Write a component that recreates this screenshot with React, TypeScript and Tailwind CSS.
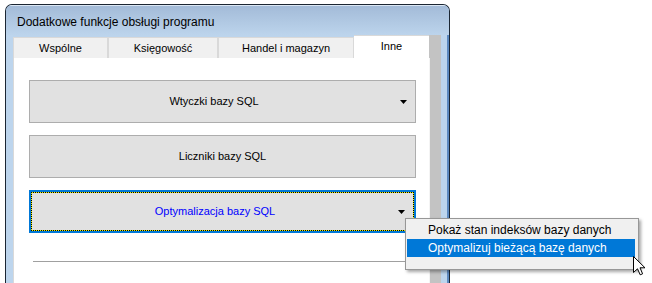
import React from "react";

const tabs = [
  { label: "Wspólne", w: "w-[95px]" },
  { label: "Księgowość", w: "w-[110px]" },
  { label: "Handel i magazyn", w: "w-[136px]" },
];

const Arrow = () => (
  <svg width="7" height="4" viewBox="0 0 7 4" className="absolute right-[8px] top-1/2 -translate-y-1/2">
    <polygon points="0,0 7,0 3.5,4" fill="#000" />
  </svg>
);

const Cursor = () => (
  <svg width="13" height="20" viewBox="0 0 13 20" className="absolute left-[633px] top-[256px]">
    <path
      d="M0.5,0.5 L0.5,16.5 L4.5,12.8 L7.2,18.8 L9.6,17.8 L7,11.8 L12,11.8 Z"
      fill="#fff"
      stroke="#000"
      strokeWidth="1"
      strokeLinejoin="round"
    />
  </svg>
);

const App = () => {
  return (
    <div className="w-[652px] h-[283px] bg-white overflow-hidden relative font-['Liberation_Sans',Arial,sans-serif]">
      <div className="ml-[5px] mt-[4px] w-[445px] h-[300px] rounded-t-[7px] border border-[#1b2633] border-b-0 bg-[#bcd4ec] flex flex-col overflow-hidden">
        <div className="h-[30px] shrink-0 flex items-center pl-[11px] pt-[3px] text-[12px] text-black bg-gradient-to-b from-[#a3bbd8] to-[#bcd4ec] border-t border-[#dbe7f4]">
          Dodatkowe funkcje obsługi programu
        </div>
        <div className="flex flex-1">
          <div className="w-[7px] bg-[#bdd5ed]" />
          <div className="w-[416px] flex flex-col">
            <div className="h-[23px] flex items-end text-[11px] text-black">
              {tabs.map((t) => (
                <div
                  key={t.label}
                  className={`${t.w} h-[21px] bg-[#f0f0f0] border border-b-0 border-[#d9d9d9] flex items-center justify-center`}
                >
                  {t.label}
                </div>
              ))}
              <div className="w-[75px] h-[23px] bg-white border-t border-[#d9d9d9] flex items-center justify-center pb-[2px]">
                Inne
              </div>
            </div>
            <div className="flex-1 bg-white border-l border-[#d9d9d9] pl-[15px] pt-[22px] text-[11px]">
              <div className="relative w-[387px] h-[43px] bg-[#e1e1e1] border border-[#adadad] flex items-center justify-center pr-[17px]">
                Wtyczki bazy SQL
                <Arrow />
              </div>
              <div className="mt-[12px] w-[387px] h-[43px] bg-[#e1e1e1] border border-[#adadad] flex items-center justify-center">
                Liczniki bazy SQL
              </div>
              <div className="mt-[12px] w-[387px] h-[43px] border-2 border-[#0078d7] bg-[#e1e1e1]">
                <div className="h-full border border-dotted border-black bg-[#f2f200]">
                  <div className="relative h-full bg-[#e1e1e1] flex items-center justify-center pr-[15px] text-[#0000ff]">
                    Optymalizacja bazy SQL
                    <Arrow />
                  </div>
                </div>
              </div>
              <div className="mt-[28px] ml-[4px] w-[383px] h-px bg-[#a0a0a0]" />
            </div>
          </div>
          <div className="w-[12px] flex">
            <div className="w-[2px] bg-[#c3c3c3] flex flex-col">
              <div className="h-[23px]" />
              <div className="flex-1 bg-[#f4f4f4] w-[1px]" />
            </div>
            <div className="flex-1 bg-[#c3c3c3]" />
          </div>
          <div className="w-[6px] bg-[#bdd5ed]" />
          <div className="w-[2px] bg-[#5d8ac0]" />
        </div>
      </div>

      <div className="absolute left-[405px] top-[218px] w-[234px] h-[52px] bg-[#f0f0f0] border border-[#979797] shadow-[2px_2px_3px_rgba(0,0,0,0.35)] pt-[2px] pl-px pr-[3px] text-[12px]">
        <div className="h-[18px] flex items-center pl-[21px] text-black">Pokaż stan indeksów bazy danych</div>
        <div className="h-[18px] flex items-center pl-[21px] bg-[#0078d7] text-white">Optymalizuj bieżącą bazę danych</div>
      </div>
      <Cursor />
    </div>
  );
};

export default App;
